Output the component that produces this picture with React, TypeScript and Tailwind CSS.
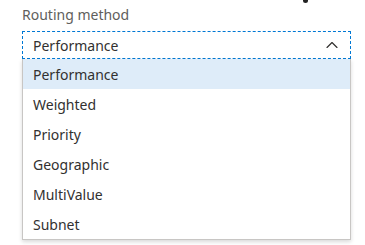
import { ChevronUp } from "lucide-react";

const OPTIONS = ["Performance", "Weighted", "Priority", "Geographic", "MultiValue", "Subnet"];

export default function App() {
  const selected = "Performance";

  return (
    <div className="h-[245px] w-[365px] overflow-hidden bg-white text-[14px] text-[#323130] [font-family:'Noto_Sans',sans-serif]">
      <div className="flex h-[4px] pl-[303px]">
        <div className="h-[3px] w-[5px] rounded-b-sm bg-[#222]" />
      </div>
      <div className="pl-[22px] pr-[14px]">
        <label className="block h-[27px] leading-[22px] text-[#605e5c]">Routing method</label>
        <div className="flex h-[28px] items-center justify-between border border-dashed border-[#0078d4] pl-[10px] pr-[8px]">
          <span>{selected}</span>
          <ChevronUp size={20} strokeWidth={1.4} className="text-[#323130]" />
        </div>
        <ul className="border border-t-0 border-[#c8c6c4] bg-white shadow-[0_2px_4px_rgba(0,0,0,0.15)]">
          {OPTIONS.map((option) => (
            <li
              key={option}
              className={`flex h-[30px] items-center pl-[10px] ${option === selected ? "bg-[#deecf9]" : ""}`}
            >
              {option}
            </li>
          ))}
        </ul>
      </div>
    </div>
  );
}
